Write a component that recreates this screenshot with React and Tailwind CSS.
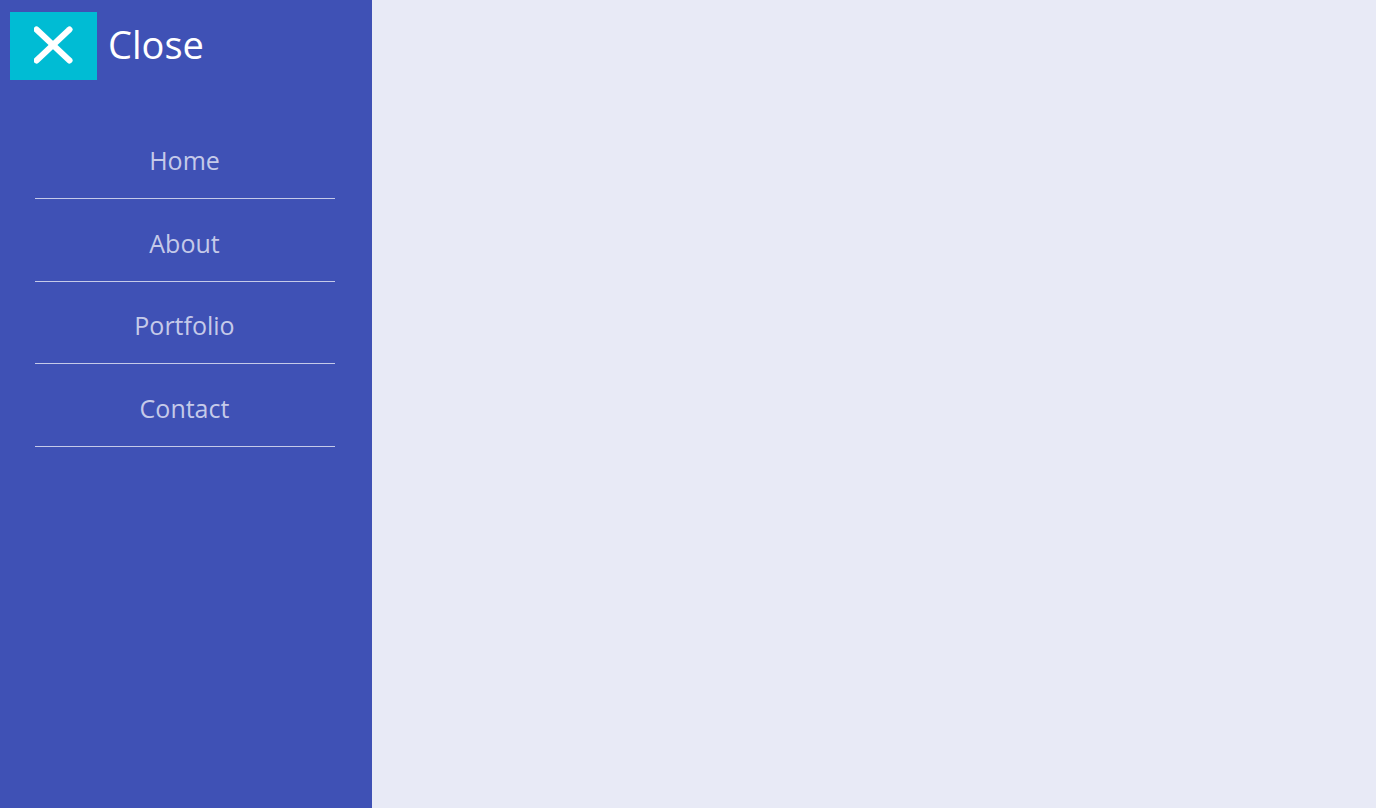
import React from "react";

const links = ["Home", "About", "Portfolio", "Contact"];

export default function App() {
  return (
    <div className="flex h-[808px] w-full overflow-hidden bg-[#e8eaf6] font-['Open_Sans','Noto_Sans',sans-serif]">
      <aside className="h-full w-[372px] shrink-0 bg-[#3f51b5]">
        {/* Close button */}
        <div className="flex items-center pl-[10px] pt-[12px]">
          <button className="flex h-[68px] w-[87px] items-center justify-center bg-[#00bcd4]" aria-label="Close">
            <svg width="40" height="40" viewBox="0 0 40 40" fill="none" stroke="white" strokeWidth="6" strokeLinecap="round">
              <path d="M2.5 3.5L35.5 34.5" />
              <path d="M35.5 3.5L2.5 34.5" />
            </svg>
          </button>
          <span className="ml-[11px] pb-[4px] text-[38px] leading-[50px] text-white">Close</span>
        </div>

        <nav className="mx-[35px] mt-[36.4px] w-[300px]">
          {links.map((link) => (
            <a key={link} className="block h-[82.67px] border-b border-[#c5cae9] pr-[1px] pt-[25.7px] text-center text-[25px] leading-[36px] text-[#c5cae9]">
              {link}
            </a>
          ))}
        </nav>
      </aside>
      <main className="flex-1" />
    </div>
  );
}
